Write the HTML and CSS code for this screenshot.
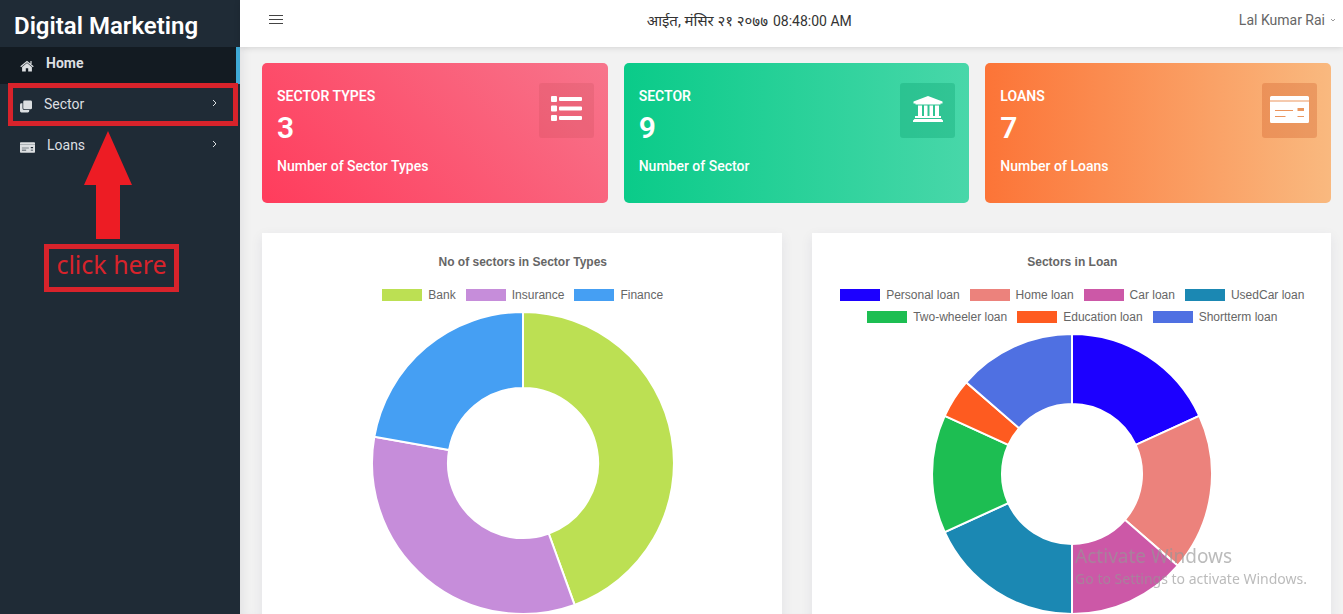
FILE: index.html
```html
<!DOCTYPE html>
<html lang="en">
<head>
<meta charset="utf-8">
<title>Digital Marketing</title>
<link rel="stylesheet" href="styles.css">
</head>
<body>
<div class="shell">
  <aside class="sidebar">
    <h1 class="brand">Digital Marketing</h1>
    <nav class="nav">
      <a class="nav-item active" href="#">
        <svg class="nav-icon home" viewBox="0 0 14 12"><path d="M7 2.9 2.1 7v4.5h3.7V8.2h2.4v3.3h3.7V7z"/><path d="M.7 6.8 7 1.5l6.3 5.3M11 1v3" fill="none" stroke="currentColor" stroke-width="1.2"/></svg>
        <span>Home</span>
      </a>
      <a class="nav-item" href="#">
        <svg class="nav-icon copy" viewBox="0 0 13 13"><rect x="3.5" y="0" width="9.5" height="9.5" rx="1.5"/><path d="M2.7 3H1.5A1.5 1.5 0 0 0 0 4.500V11.500A1.500 1.500 0 0 0 1.500 13H8.500A1.500 1.500 0 0 0 10 11.500V10.300H4.500A1.800 1.800 0 0 1 2.700 8.500z"/></svg>
        <span>Sector</span>
        <svg class="chevron" viewBox="0 0 5 8"><path d="m1 1 3 3-3 3"/></svg>
      </a>
      <a class="nav-item" href="#">
        <svg class="nav-icon check" viewBox="0 0 39 27"><path fill-rule="evenodd" d="M0 5V2Q0 0 2 0H37Q39 0 39 2V5zM0 6H39V25Q39 27 37 27H2Q0 27 0 25zM5 14V15.500H23V14zM5 19.500V21H16V19.500zM28 12V15.500H34V12zM28 19.500V21H34V19.500z"/></svg>
        <span>Loans</span>
        <svg class="chevron" viewBox="0 0 5 8"><path d="m1 1 3 3-3 3"/></svg>
      </a>
    </nav>
    <div class="mark-frame"></div>
    <div class="callout">
      <svg class="arrow" viewBox="0 0 48 108"><path d="M24 0 48 54H36V108H12V54H0z"/></svg>
      <div class="callout-label">click here</div>
    </div>
  </aside>

  <div class="page">
    <header class="topbar">
      <button class="menu" type="button" aria-label="Toggle menu">
        <svg viewBox="0 0 14 11"><path d="M0 1.500h14M0 5.500h14M0 9.500h14"/></svg>
      </button>
      <time class="clock"><span class="date" lang="ne">आईत, मंसिर २१ २०७७</span> <span>08:48:00 AM</span></time>
      <button class="user" type="button">Lal Kumar Rai
        <svg viewBox="0 0 6 4"><path d="m1 1 2 2 2-2"/></svg>
      </button>
    </header>

    <main class="content">
      <section class="stats">
        <article class="stat rose">
          <div>
            <h2>Sector Types</h2>
            <p class="count">3</p>
            <p class="note">Number of Sector Types</p>
          </div>
          <div class="tile"><svg class="list" viewBox="0 0 31 25"><path d="M1 0H5Q6 0 6 1V5Q6 6 5 6H1Q0 6 0 5V1Q0 0 1 0zM9 1H30Q31 1 31 2V4Q31 5 30 5H9Q8 5 8 4V2Q8 1 9 1zM1 9.500H5Q6 9.500 6 10.500V14.500Q6 15.500 5 15.500H1Q0 15.500 0 14.500V10.500Q0 9.500 1 9.500zM9 10.500H30Q31 10.500 31 11.500V13.500Q31 14.500 30 14.500H9Q8 14.500 8 13.500V11.500Q8 10.500 9 10.500zM1 19H5Q6 19 6 20V24Q6 25 5 25H1Q0 25 0 24V20Q0 19 1 19zM9 20H30Q31 20 31 21V23Q31 24 30 24H9Q8 24 8 23V21Q8 20 9 20z"/></svg></div>
        </article>
        <article class="stat green">
          <div>
            <h2>Sector</h2>
            <p class="count">9</p>
            <p class="note">Number of Sector</p>
          </div>
          <div class="tile"><svg class="bank" viewBox="0 0 30 26"><path d="M15 0 29.500 5.500V7.500H27.500V8.500H2.500V7.500H.5V5.500zM5 9.500H9V20H11V9.500H14.500V20H16.500V9.500H20V20H22V9.500H26V20H28V22H2V20H5zM1.500 23H28.500L30 24.500V26H0V24.500z"/></svg></div>
        </article>
        <article class="stat orange">
          <div>
            <h2>Loans</h2>
            <p class="count">7</p>
            <p class="note">Number of Loans</p>
          </div>
          <div class="tile"><svg class="card" viewBox="0 0 39 27"><path fill-rule="evenodd" d="M0 4.500V1.500Q0 0 1.500 0H37.500Q39 0 39 1.500V4.500zM0 5.500H39V25.500Q39 27 37.500 27H1.500Q0 27 0 25.500zM5 14V15H23V14zM5 20V21H15.500V20zM27.500 12V15H34V12zM27.500 20V21H34V20z"/></svg></div>
        </article>
      </section>

      <section class="charts">
        <article class="panel">
          <h3>No of sectors in Sector Types</h3>
          <ul class="legend">
            <li><i class="swatch c-bank"></i>Bank</li>
            <li><i class="swatch c-insurance"></i>Insurance</li>
            <li><i class="swatch c-finance"></i>Finance</li>
          </ul>
          <svg class="donut wide" viewBox="-152 -152 304 304" role="img" aria-label="Sectors by type">
            <path class="c-bank" d="M0-151A151 151 0 0 1 51.600 141.900L25.700 70.500A75 75 0 0 0 0-75z"/>
            <path class="c-insurance" d="M51.600 141.900A151 151 0 0 1-148.700-26.200L-73.900-13A75 75 0 0 0 25.700 70.500z"/>
            <path class="c-finance" d="M-148.700-26.200A151 151 0 0 1 0-151V-75A75 75 0 0 0-73.900-13z"/>
          </svg>
        </article>
        <article class="panel">
          <h3>Sectors in Loan</h3>
          <ul class="legend">
            <li><i class="swatch c-personal"></i>Personal loan</li>
            <li><i class="swatch c-home"></i>Home loan</li>
            <li><i class="swatch c-car"></i>Car loan</li>
            <li><i class="swatch c-used"></i>UsedCar loan</li>
            <li><i class="swatch c-two"></i>Two-wheeler loan</li>
            <li><i class="swatch c-edu"></i>Education loan</li>
            <li><i class="swatch c-short"></i>Shortterm loan</li>
          </ul>
          <svg class="donut" viewBox="-141 -141 282 282" role="img" aria-label="Sectors by loan">
            <path class="c-personal" d="M0-140A140 140 0 0 1 127.300-58.200L63.700-29.100A70 70 0 0 0 0-70z"/>
            <path class="c-home" d="M127.300-58.200A140 140 0 0 1 105.800 91.700L52.900 45.800A70 70 0 0 0 63.700-29.100z"/>
            <path class="c-car" d="M105.800 91.700A140 140 0 0 1 0 140V70A70 70 0 0 0 52.900 45.800z"/>
            <path class="c-used" d="M0 140A140 140 0 0 1-127.300 58.200L-63.700 29.100A70 70 0 0 0 0 70z"/>
            <path class="c-two" d="M-127.300 58.200A140 140 0 0 1-127.300-58.200L-63.700-29.100A70 70 0 0 0-63.700 29.100z"/>
            <path class="c-edu" d="M-127.300-58.200A140 140 0 0 1-105.800-91.700L-52.900-45.800A70 70 0 0 0-63.700-29.100z"/>
            <path class="c-short" d="M-105.800-91.700A140 140 0 0 1 0-140V-70A70 70 0 0 0-52.900-45.800z"/>
          </svg>
        </article>
      </section>
    </main>
  </div>
</div>
<div class="watermark">
  <p class="watermark-title">Activate Windows</p>
  <p>Go to Settings to activate Windows.</p>
</div>
</body>
</html>
```

FILE: styles.css
```css
* { box-sizing: border-box; }
body, h1, h2, h3, p, ul { margin: 0; padding: 0; }
body { font-family: Roboto, "Noto Sans", sans-serif; font-size: 14px; color: #555; }
button { border: 0; padding: 0; background: none; font: inherit; color: inherit; cursor: pointer; }
svg { display: block; fill: currentColor; flex: none; }

.shell { display: flex; height: 100vh; overflow: hidden; background: #f2f2f2; }

/* Sidebar */
.sidebar { position: relative; flex: none; width: 240px; background: #1f2b36; color: #dcdfe1; }
.brand { height: 47px; padding-left: 14px; font-size: 24px; font-weight: 600; line-height: 52px; color: #fff; }
.nav { display: flex; flex-direction: column; gap: 4px; }
.nav-item { display: flex; align-items: center; height: 37px; padding: 0 23px 0 20px; color: inherit; text-decoration: none; line-height: 16px; }
.nav-item span { flex: 1; padding-bottom: 6px; }
.nav-item.active { background: #131b22; border-right: 4px solid #3fa9d5; font-weight: 700; }
.nav-icon.home { width: 14px; height: 12px; margin-right: 12px; }
.nav-icon.copy { width: 12px; height: 13px; margin-right: 12px; }
.nav-icon.check { width: 15px; height: 11px; margin-right: 12px; }
.chevron { width: 5px; height: 8px; margin-bottom: 8px; fill: none; stroke: currentColor; }

/* Guide marks lying over the sidebar */
.mark-frame { position: absolute; top: 83px; left: 8px; width: 230px; height: 43px; border: 5px solid #d8232b; }
.callout { position: absolute; top: 131px; left: 44px; display: flex; flex-direction: column; gap: 5px; }
.arrow { width: 48px; height: 108px; margin-left: 40px; color: #ed1c24; }
.callout-label { width: 135px; height: 48px; border: 5px solid #d8232b; color: #d8232b; font-family: "Noto Sans", sans-serif; font-size: 25px; line-height: 30px; text-align: center; white-space: nowrap; }

/* Top bar */
.page { flex: 1; min-width: 0; display: flex; flex-direction: column; }
.topbar { position: relative; display: grid; grid-template-columns: 39fr auto 50fr; align-items: center; height: 47px; padding: 0 7px 8px 29px; background: #fff; box-shadow: 0 1px 6px rgba(0, 0, 0, .12); }
.menu { justify-self: start; }
.menu svg { width: 14px; height: 11px; stroke: #444; stroke-width: 1; }
.clock { display: flex; align-items: baseline; gap: 5px; color: #333; white-space: nowrap; }
.date { font-size: 15px; }
.user { justify-self: end; display: flex; align-items: center; gap: 5px; color: #666; }
.user svg { width: 6px; height: 4px; fill: none; stroke: #999; }

/* Stat cards */
.content { flex: 1; min-height: 0; overflow-y: auto; scrollbar-width: none; padding: 16px 12px 0 22px; box-shadow: inset 10px 0 12px -8px rgba(0, 0, 40, .08); }
.stats { display: grid; grid-template-columns: repeat(3, 1fr); gap: 16px; }
.stat { display: flex; justify-content: space-between; align-items: flex-start; height: 140px; padding: 20px 14px 0 15px; border-radius: 5px; color: #fff; }
.rose { background: linear-gradient(45deg, #ff3c5c, #f7758c); }
.green { background: linear-gradient(to right, #0acb89, #48d7a9); }
.orange { background: linear-gradient(to right, #fc7437, #f9b97f); }
.stat h2 { padding-top: 4px; font-size: 14px; font-weight: 600; line-height: 18px; text-transform: uppercase; }
.count { padding-top: 2px; font-size: 30px; font-weight: 600; line-height: 42px; }
.note { padding-top: 8px; font-weight: 500; line-height: 18px; }
.tile { display: flex; justify-content: center; width: 55px; height: 55px; padding-top: 13px; border-radius: 3px; background: rgba(175, 60, 70, .16); }
.green .tile { background: rgba(0, 150, 100, .28); }
.orange .tile { background: rgba(200, 80, 30, .28); }
.list { width: 31px; height: 25px; }
.bank { width: 30px; height: 26px; }
.card { width: 39px; height: 27px; }

/* Chart panels */
.charts { display: grid; grid-template-columns: repeat(2, 1fr); gap: 30px; margin-top: 30px; }
.panel { display: flex; flex-direction: column; align-items: center; padding: 20px 18px 30px 20px; background: #fff; box-shadow: 0 4px 12px rgba(40, 40, 90, .08); font: 12px/18px "Liberation Sans", Arial, sans-serif; color: #666; }
.panel h3 { font-size: 12px; line-height: 18px; }
.legend { display: flex; flex-wrap: wrap; justify-content: center; gap: 4px 10px; margin: 15px 0 7px; list-style: none; }
.legend li { display: flex; align-items: center; gap: 6px; }
.swatch { width: 40px; height: 12px; }
.donut { width: 282px; height: 282px; stroke: #fff; stroke-width: 2; }
.donut.wide { width: 304px; height: 304px; }
.c-bank { fill: #bce053; background: #bce053; }
.c-insurance { fill: #c68dda; background: #c68dda; }
.c-finance { fill: #459ff3; background: #459ff3; }
.c-personal { fill: #1c00ff; background: #1c00ff; }
.c-home { fill: #ec827c; background: #ec827c; }
.c-car { fill: #cc58a7; background: #cc58a7; }
.c-used { fill: #1b88b3; background: #1b88b3; }
.c-two { fill: #1dbe52; background: #1dbe52; }
.c-edu { fill: #fe5b20; background: #fe5b20; }
.c-short { fill: #4f70e2; background: #4f70e2; }

/* System watermark over the page */
.watermark { position: fixed; right: 36px; bottom: 24px; color: rgba(150, 150, 150, .65); font-family: "Noto Sans", sans-serif; font-size: 14px; line-height: 22px; pointer-events: none; }
.watermark-title { font-size: 19px; line-height: 24px; }
```
